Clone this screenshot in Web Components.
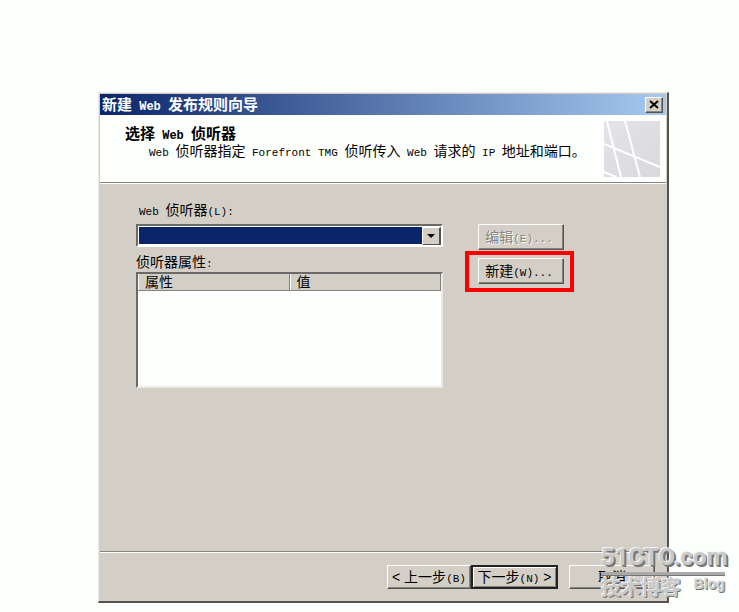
<!DOCTYPE html>
<html lang="zh-CN">
<head>
<meta charset="utf-8">
<title>新建 Web 发布规则向导</title>
<style>
  body {
    margin: 0;
    padding: 92px 70px 8px 98px;
    background: #fdfffc;
    color: #000;
    font: 14px/18px "Liberation Sans", "Noto Sans CJK SC", sans-serif;
  }

  .en {
    font-family: "Liberation Mono", monospace;
    font-size: 11px;
    line-height: 1;
    white-space: pre;
  }

  .en.big {
    font-size: 12px;
  }
</style>
</head>
<body>
<wizard-dialog>
  <span slot="title">新建<span class="en big"> Web </span>发布规则向导</span>
  <wizard-header slot="header">
    <span slot="heading">选择<span class="en big"> Web </span>侦听器</span>
    <span class="en">Web </span>侦听器指定<span class="en"> Forefront TMG </span>侦听传入<span class="en"> Web </span>请求的<span class="en"> IP </span>地址和端口。
  </wizard-header>

  <listener-form>
    <combo-box><span class="en">Web </span>侦听器<span class="en">(L):</span></combo-box>
    <property-list>侦听器属性<span class="en">:</span></property-list>
    <win-button slot="actions" disabled>编辑<span class="en">(E)...</span></win-button>
    <win-button slot="actions" marked>新建<span class="en">(W)...</span></win-button>
  </listener-form>

  <wizard-footer slot="footer">
    <win-button>&lt; 上一步<span class="en">(B)</span></win-button>
    <win-button primary>下一步<span class="en">(N)</span> &gt;</win-button>
    <win-button slot="cancel">取消</win-button>
  </wizard-footer>

  <site-mark slot="mark">
    51CTO.com
    <span slot="name">技术博客</span>
    <span slot="kind">Blog</span>
  </site-mark>
</wizard-dialog>

<script>
class BaseElement extends HTMLElement {
  constructor() {
    super();
    this.attachShadow({ mode: "open" });
  }

  connectedCallback() {
    this.shadowRoot.innerHTML = this.template();
  }
}

class WizardDialog extends BaseElement {
  template() {
    return `
    <style>
      :host {
        display: block;
        position: relative;
        background: #d3cfc6;
        border: 1px solid #eceae6;
        border-right: 2px solid #55534f;
        border-bottom: 2px solid #55534f;
        padding: 1px;
      }

      .bar {
        display: flex;
        align-items: center;
        justify-content: space-between;
        height: 21px;
        padding: 0 3px 0 2px;
        background: linear-gradient(90deg, #0b256b, #a5caf0);
        color: #fff;
        font-size: 15px;
        font-weight: bold;
      }

      button {
        display: grid;
        place-items: center;
        width: 18px;
        height: 16px;
        padding: 0;
        background: #d3cfc6;
        border: 1px solid #fff;
        border-right-color: #55534f;
        border-bottom-color: #55534f;
        box-shadow: inset -1px -1px #8a8883;
      }
    </style>
    <div class="bar">
      <slot name="title"></slot>
      <button aria-label="关闭">
        <svg width="10" height="9" viewBox="0 0 10 9"><path d="M1 1L9 8M9 1L1 8" stroke="#000" stroke-width="2"/></svg>
      </button>
    </div>
    <slot name="header"></slot>
    <slot></slot>
    <slot name="footer"></slot>
    <slot name="mark"></slot>
    `;
  }
}

class WizardHeader extends BaseElement {
  template() {
    return `
    <style>
      :host {
        display: flex;
        justify-content: space-between;
        padding: 6px 6px 5px 25px;
        background: #fdfffc;
        border-bottom: 1px solid #85837e;
        box-shadow: 0 1px #fff;
      }

      .heading {
        padding-top: 4px;
        font-size: 15px;
        font-weight: bold;
        line-height: 18px;
      }

      .text {
        padding-left: 24px;
        line-height: 16px;
        white-space: nowrap;
      }

      svg {
        flex: none;
      }
    </style>
    <div>
      <div class="heading"><slot name="heading"></slot></div>
      <div class="text"><slot></slot></div>
    </div>
    <svg width="56" height="56" viewBox="0 0 56 56">
      <defs>
        <linearGradient id="g" x1="0" y1="0" x2="1" y2="1">
          <stop offset="0" stop-color="#e4e4e8"/>
          <stop offset="1" stop-color="#d9d9dd"/>
        </linearGradient>
      </defs>
      <rect width="56" height="56" fill="url(#g)"/>
      <path d="M3 0L17 56M21 0L36 56M0 23L56 46M0 51L12 56" fill="none" stroke="#fff" stroke-width="2"/>
    </svg>
    `;
  }
}

class ListenerForm extends BaseElement {
  template() {
    return `
    <style>
      :host {
        display: grid;
        grid-template-columns: minmax(0, 1fr) 86px;
        gap: 35px;
        min-height: 350px;
        padding: 18px 102px 0 36px;
      }

      .actions {
        display: grid;
        align-content: start;
        gap: 8px;
        padding-top: 23px;
      }
    </style>
    <div><slot></slot></div>
    <div class="actions"><slot name="actions"></slot></div>
    `;
  }
}

class ComboBox extends BaseElement {
  template() {
    return `
    <style>
      :host {
        display: block;
        margin-bottom: 6px;
      }

      label {
        display: block;
        padding: 0 0 5px 3px;
      }

      .box {
        display: flex;
        height: 18px;
        border: 2px solid #fff;
        border-top-color: #6c6a66;
        border-left-color: #6c6a66;
        background: #fff;
        padding: 1px 0 0 1px;
      }

      select {
        flex: 1;
        min-width: 0;
        appearance: none;
        border: 0;
        border-radius: 0;
        margin-bottom: 1px;
        background: #0b256b;
        color: #fff;
      }

      .arrow {
        display: grid;
        place-items: center;
        width: 16px;
        background: #d3cfc6;
        border: 1px solid #fff;
        border-right: 2px solid #55534f;
        border-bottom-color: #55534f;
      }
    </style>
    <label for="listener"><slot></slot></label>
    <div class="box">
      <select id="listener"><option></option></select>
      <span class="arrow"><svg width="8" height="4" viewBox="0 0 8 4"><path d="M0 0H8L4 4Z"/></svg></span>
    </div>
    `;
  }
}

class PropertyList extends BaseElement {
  template() {
    return `
    <style>
      :host {
        display: block;
      }

      #caption {
        padding-bottom: 1px;
      }

      .box {
        min-height: 112px;
        border: 2px solid #eceae6;
        border-top-color: #6c6a66;
        border-left-color: #6c6a66;
        background: #fdfffc;
      }

      table {
        width: 100%;
        border-collapse: separate;
        border-spacing: 0;
        table-layout: fixed;
      }

      th {
        height: 16px;
        padding: 0 7px;
        background: #d3cfc6;
        border-right: 1px solid #85837e;
        border-bottom: 1px solid #85837e;
        box-shadow: inset 1px 0 #fff;
        font-weight: normal;
        line-height: 16px;
        text-align: left;
      }
    </style>
    <div id="caption"><slot></slot></div>
    <div class="box">
      <table aria-labelledby="caption">
        <thead><tr><th>属性</th><th>值</th></tr></thead>
      </table>
    </div>
    `;
  }
}

class WinButton extends BaseElement {
  template() {
    return `
    <style>
      :host {
        display: block;
        position: relative;
      }

      button {
        display: block;
        width: 100%;
        height: 24px;
        padding: 0;
        background: #d3cfc6;
        border: 1px solid #fff;
        border-right-color: #55534f;
        border-bottom-color: #55534f;
        box-shadow: inset -1px -1px #85837e;
        color: #000;
        font: inherit;
        white-space: nowrap;
      }

      button:disabled {
        color: #85837e;
        text-shadow: 1px 1px #fff;
      }

      :host([slot="actions"]) button {
        height: 26px;
        padding-right: 4px;
      }

      :host([primary]) button {
        border: 2px solid #222;
        box-shadow: inset 1px 1px #fff, inset -1px -1px #85837e;
      }

      :host([marked])::after {
        content: "";
        position: absolute;
        inset: -7px -10px -8px -13px;
        border: 4px solid #f00;
        pointer-events: none;
      }
    </style>
    <button ${this.hasAttribute("disabled") ? "disabled" : ""}><slot></slot></button>
    `;
  }
}

class WizardFooter extends BaseElement {
  template() {
    return `
    <style>
      :host {
        display: flex;
        justify-content: flex-end;
        gap: 11px;
        padding: 13px 11px 11px 0;
        border-top: 1px solid #85837e;
        box-shadow: inset 0 1px #fff;
      }

      .steps {
        display: grid;
        grid-template-columns: 84px 87px;
      }

      .cancel {
        width: 86px;
      }
    </style>
    <div class="steps"><slot></slot></div>
    <div class="cancel"><slot name="cancel"></slot></div>
    `;
  }
}

class SiteMark extends BaseElement {
  template() {
    return `
    <style>
      :host {
        display: block;
        position: absolute;
        right: -58px;
        bottom: 0;
        width: 124px;
        color: #c9c9c9;
        font-weight: bold;
        text-shadow: -1px -1px #f2f2f2, 1px 1px #777, 2px 2px #777;
        pointer-events: none;
      }

      .site {
        border-bottom: 3px solid #aaa;
        box-shadow: 0 1px #777;
        font-family: Roboto, "Liberation Sans", sans-serif;
        font-size: 24px;
        line-height: 30px;
        white-space: nowrap;
      }

      .row {
        display: flex;
        justify-content: space-between;
        font-size: 20px;
        line-height: 26px;
        text-shadow: -1px -1px #f2f2f2, 1px 1px #777;
      }

      .kind {
        font-size: 14px;
        line-height: 18px;
      }
    </style>
    <div class="site"><slot></slot></div>
    <div class="row">
      <slot name="name"></slot>
      <span class="kind"><slot name="kind"></slot></span>
    </div>
    `;
  }
}

customElements.define("wizard-dialog", WizardDialog);
customElements.define("wizard-header", WizardHeader);
customElements.define("listener-form", ListenerForm);
customElements.define("combo-box", ComboBox);
customElements.define("property-list", PropertyList);
customElements.define("win-button", WinButton);
customElements.define("wizard-footer", WizardFooter);
customElements.define("site-mark", SiteMark);
</script>
</body>
</html>
